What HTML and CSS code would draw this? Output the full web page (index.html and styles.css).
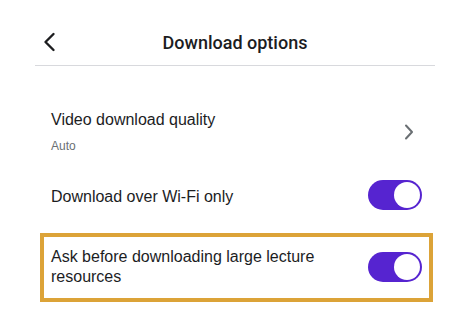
FILE: index.html
```html
<!DOCTYPE html>
<html lang="en">
<head>
<meta charset="utf-8">
<title>Download options</title>
<link rel="stylesheet" href="styles.css">
</head>
<body>
<div class="screen">
  <header class="header">
    <button class="back" aria-label="Back">
      <svg width="14" height="20" viewBox="0 0 14 20"><polyline points="11.5,2 3.5,10 11.5,18" fill="none" stroke="#1c1d1f" stroke-width="2.4" stroke-linecap="round" stroke-linejoin="round"/></svg>
    </button>
    <h1 class="title">Download options</h1>
    <span class="spacer"></span>
  </header>
  <div class="list">
    <div class="row row-first">
      <div class="label">
        <div class="main">Video download quality</div>
        <div class="sub">Auto</div>
      </div>
      <svg class="chev" width="10" height="16" viewBox="0 0 10 16"><polyline points="2,1.5 8,8 2,14.5" fill="none" stroke="#6a6f73" stroke-width="2" stroke-linecap="round" stroke-linejoin="round"/></svg>
    </div>
    <div class="row row-second">
      <div class="label"><div class="main">Download over Wi-Fi only</div></div>
      <span class="toggle"><span class="knob"></span></span>
    </div>
    <div class="row row-third highlight">
      <div class="label"><div class="main">Ask before downloading large lecture<br>resources</div></div>
      <span class="toggle"><span class="knob"></span></span>
    </div>
  </div>
</div>
</body>
</html>
```
FILE: styles.css
```css
* { box-sizing: border-box; }
html, body { margin: 0; padding: 0; background: #fff; }
body {
  font-family: "Liberation Sans", Arial, sans-serif;
  color: #1c1d1f;
  width: 468px;
  height: 333px;
  overflow: hidden;
}
.header {
  margin: 0 33px 0 35px;
  height: 66px;
  padding-top: 20px;
  border-bottom: 1px solid #d8d9dd;
  display: grid;
  grid-template-columns: 1fr auto 1fr;
  align-items: center;
}
.back {
  border: 0;
  background: none;
  padding: 0 0 0 7px;
  margin: 0;
  width: 40px;
  height: 46px;
  display: flex;
  align-items: center;
  justify-self: start;
}
.back svg { display: block; margin-top: -2px; }
.title {
  margin: 0;
  font-family: Roboto, "Liberation Sans", sans-serif;
  font-size: 18px;
  font-weight: 500;
  line-height: 46px;
  height: 46px;
  margin-top: -1px;
  color: #1c1d1f;
}
.list {
  display: flex;
  flex-direction: column;
  margin: 0 35px 0 40px;
  padding-top: 31px;
}
.row {
  display: flex;
  align-items: center;
  justify-content: space-between;
  border: 4px solid transparent;
  padding: 8px 7px;
}
.row-second { margin-top: 2px; }
.row-second .label { padding-top: 4px; }
.row-third { margin-top: 11px; padding: 10px 7px 11px; }
.highlight { border-color: #dca338; }
.main {
  font-size: 16px;
  line-height: 20px;
}
.row-first .main { line-height: 22px; }
.sub {
  font-size: 12px;
  line-height: 16px;
  color: #6a6f73;
  margin-top: 7px;
}
.chev { display: block; margin-right: 8px; }
.toggle {
  width: 54px;
  height: 30px;
  border-radius: 15px;
  background: #5624d0;
  padding: 2px;
  display: flex;
  justify-content: flex-end;
  flex-shrink: 0;
}
.knob {
  width: 26px;
  height: 26px;
  border-radius: 50%;
  background: #fff;
}
```
